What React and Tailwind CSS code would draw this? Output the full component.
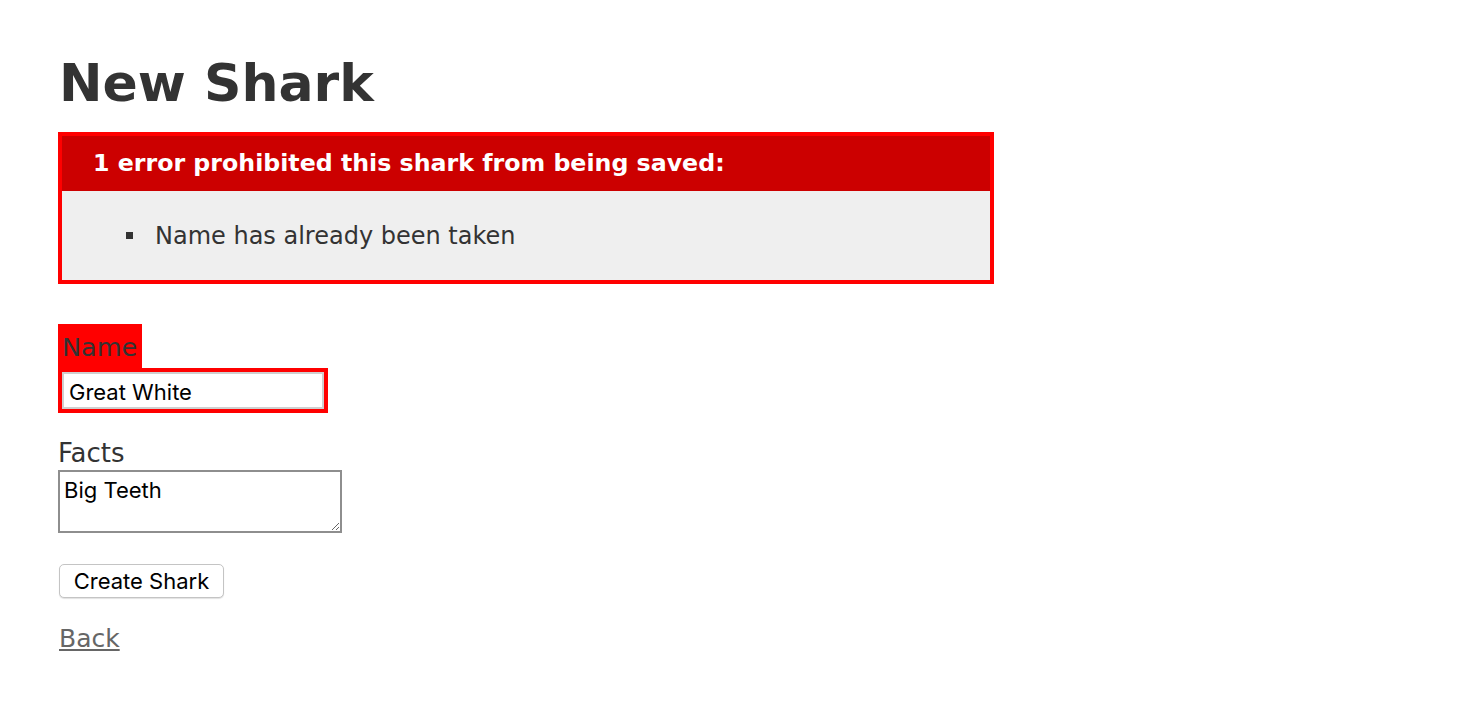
export default function App() {
  return (
    <div className="min-h-screen bg-white pl-[58px] pt-[57px] text-[#333] font-['DejaVu_Sans',Verdana,sans-serif]">
      <h1 className="ml-[1px] text-[52px] font-bold leading-[52px]">New Shark</h1>

      {/* error explanation */}
      <div className="mt-[23px] w-[936px] border-4 border-[#f00]">
        <div className="h-[55px] bg-[#c00] pl-[31px] text-[23.7px] font-bold leading-[55px] text-white">
          1 error prohibited this shark from being saved:
        </div>
        <div className="flex h-[89px] items-center bg-[#efefef] pl-[64px]">
          <span className="h-[7px] w-[7px] bg-[#333]"></span>
          <span className="ml-[22px] text-[24px]">Name has already been taken</span>
        </div>
      </div>

      <form className="mt-[40px]">
        <div className="h-[44px] w-[84px] bg-[#f00] pl-[4px] text-[25.5px] leading-[46px]">Name</div>
        <div className="h-[45px] w-[270px] bg-[#f00] p-[4px]">
          <input
            type="text"
            defaultValue="Great White"
            className="h-full w-full border-2 border-[#cfcfcf] bg-white pl-[5px] pt-[2px] text-[22px] text-black outline-none font-['Inter',sans-serif]"
          />
        </div>

        <div className="mt-[25px] h-[30px] text-[26px] leading-[30px]">Facts</div>
        <textarea
          defaultValue="Big Teeth"
          className="mt-[2px] block h-[63px] w-[284px] resize border-2 border-[#8e8e8e] pl-[4px] pt-[2px] text-[22px] text-black outline-none font-['Inter',sans-serif]"
        />

        <button
          type="button"
          className="mt-[31px] ml-[1px] flex h-[34px] w-[165px] items-center justify-center rounded-[5px] border border-[#c4c4c4] bg-white pt-[1px] text-[22px] text-black shadow-[0_1px_1px_rgba(0,0,0,0.12)] font-['Inter',sans-serif]"
        >
          Create Shark
        </button>
      </form>

      <a href="#" className="mt-[26px] ml-[1px] block w-fit text-[25px] leading-[30px] text-[#666] underline">
        Back
      </a>
    </div>
  );
}
